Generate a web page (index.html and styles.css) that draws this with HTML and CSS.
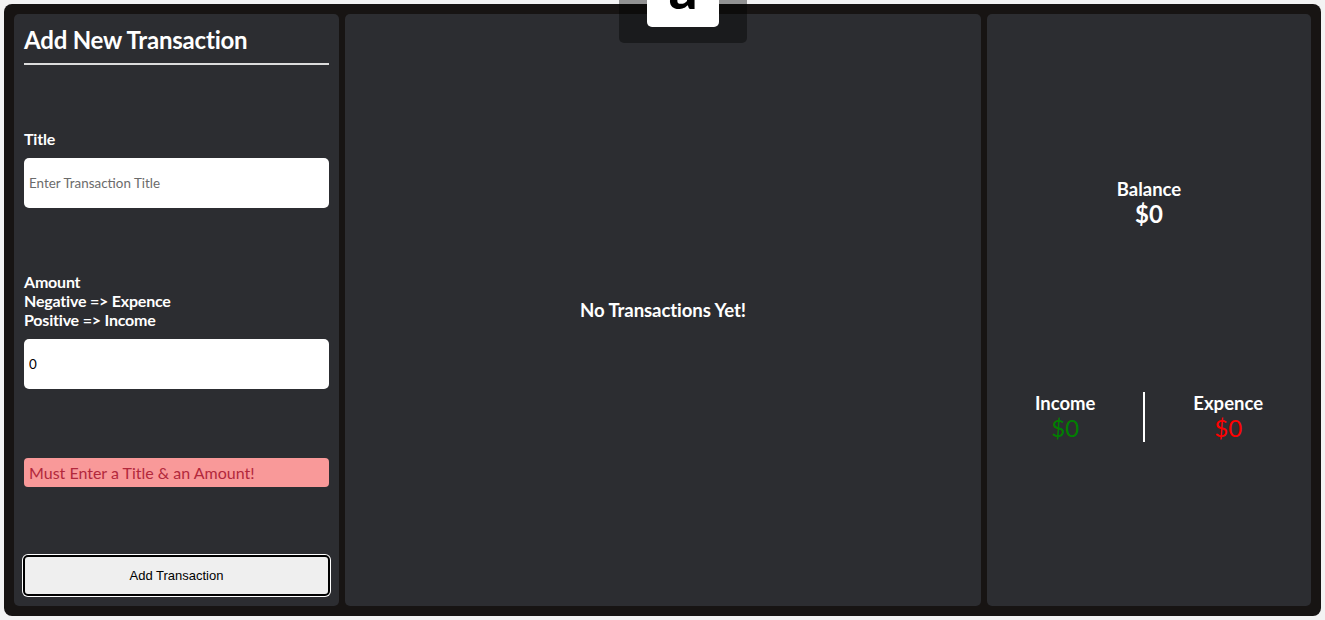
FILE: index.html
```html
<!DOCTYPE html>
<html lang="en">
<head>
<meta charset="utf-8">
<title>Expense Tracker</title>
<link rel="stylesheet" href="styles.css">
</head>
<body>
<div class="logo-tab"><div class="logo-card"><span class="logo-letter">a</span></div></div>
<main class="app">
  <section class="panel form-panel">
    <h1 class="form-title">Add New Transaction</h1>
    <div class="field field-title">
      <label class="field-label">Title</label>
      <input class="field-input" type="text" placeholder="Enter Transaction Title">
    </div>
    <div class="field field-amount">
      <label class="field-label">Amount<br>Negative =&gt; Expence<br>Positive =&gt; Income</label>
      <input class="field-input" type="text" value="0">
    </div>
    <div class="error">Must Enter a Title &amp; an Amount!</div>
    <button class="add-btn">Add Transaction</button>
  </section>
  <section class="panel list-panel">
    <p class="empty">No Transactions Yet!</p>
  </section>
  <section class="panel summary-panel">
    <div class="balance">
      <div class="sum-label">Balance</div>
      <div class="balance-value">$0</div>
    </div>
    <div class="split">
      <div class="split-col">
        <div class="sum-label">Income</div>
        <div class="split-value income">$0</div>
      </div>
      <div class="divider"></div>
      <div class="split-col">
        <div class="sum-label">Expence</div>
        <div class="split-value expense">$0</div>
      </div>
    </div>
  </section>
</main>
</body>
</html>
```
FILE: styles.css
```css
* { box-sizing: border-box; }
html, body { height: 100%; }
body {
  margin: 0;
  padding: 4px;
  background: #f3f3f3;
  font-family: Lato, "Open Sans", sans-serif;
  color: #fff;
}
.app {
  height: 612px;
  background: #171413;
  border-radius: 8px;
  padding: 10px;
  display: grid;
  grid-template-columns: 325px 1fr 324px;
  gap: 6px;
}
.panel {
  background: #2c2d31;
  border-radius: 5px;
}
.form-panel {
  padding: 10px;
  display: flex;
  flex-direction: column;
}
.form-title {
  margin: 0;
  font-size: 24px;
  line-height: 32px;
  font-weight: 700;
  letter-spacing: -0.2px;
  padding-bottom: 7px;
  border-bottom: 2px solid #dcdcdc;
}
.field { display: flex; flex-direction: column; gap: 10px; }
.field-title { margin-top: 64px; }
.field-amount { margin-top: 64px; }
.field-label {
  font-size: 16px;
  line-height: 19px;
  font-weight: 700;
  letter-spacing: -0.2px;
}
.field-input {
  height: 50px;
  border: none;
  border-radius: 5px;
  background: #fff;
  padding: 0 5px;
  font-family: Lato, sans-serif;
  font-size: 13.4px;
  color: #000;
}
.field-input::placeholder { color: #6b6b6b; }
.error {
  margin-top: 69px;
  background: #f99999;
  color: #b3283c;
  border-radius: 4px;
  height: 29px;
  line-height: 29px;
  padding: 0 5px;
  font-size: 16px;
}
.add-btn {
  margin: auto -1px 0;
  height: 41px;
  background: #efefef;
  border: 2px solid #000;
  box-shadow: 0 0 0 1px #fff;
  border-radius: 5px;
  font-family: "Liberation Sans", Arial, sans-serif;
  font-size: 13px;
  color: #000;
}
.list-panel {
  display: flex;
  align-items: center;
  justify-content: center;
}
.empty {
  margin: 0;
  font-size: 18.6px;
  font-weight: 700;
  letter-spacing: -0.1px;
}
.summary-panel {
  display: flex;
  flex-direction: column;
  justify-content: space-evenly;
}
.balance { text-align: center; }
.sum-label {
  font-size: 18.5px;
  line-height: 22px;
  font-weight: 700;
}
.balance-value {
  font-size: 24px;
  line-height: 28px;
  font-weight: 700;
}
.split { display: flex; align-items: stretch; }
.split-col { flex: 1 1 auto; text-align: center; }
.divider { width: 2px; background: #fff; }
.split-value { font-size: 24px; line-height: 28px; }
.income { color: #008000; }
.expense { color: #ff0000; }
.logo-tab {
  position: absolute;
  top: 0;
  left: 619px;
  width: 128px;
  height: 43px;
  background: rgba(0, 0, 0, 0.4);
  border-radius: 0 0 5px 5px;
  padding-left: 28px;
  z-index: 5;
}
.logo-card {
  position: relative;
  width: 72px;
  height: 27px;
  background: #fff;
  border-radius: 0 0 5px 5px;
  overflow: hidden;
}
.logo-letter {
  position: absolute;
  left: 0;
  right: 0;
  top: -40px;
  text-align: center;
  font-size: 56px;
  line-height: 56px;
  font-weight: 900;
  color: #000;
}
```
